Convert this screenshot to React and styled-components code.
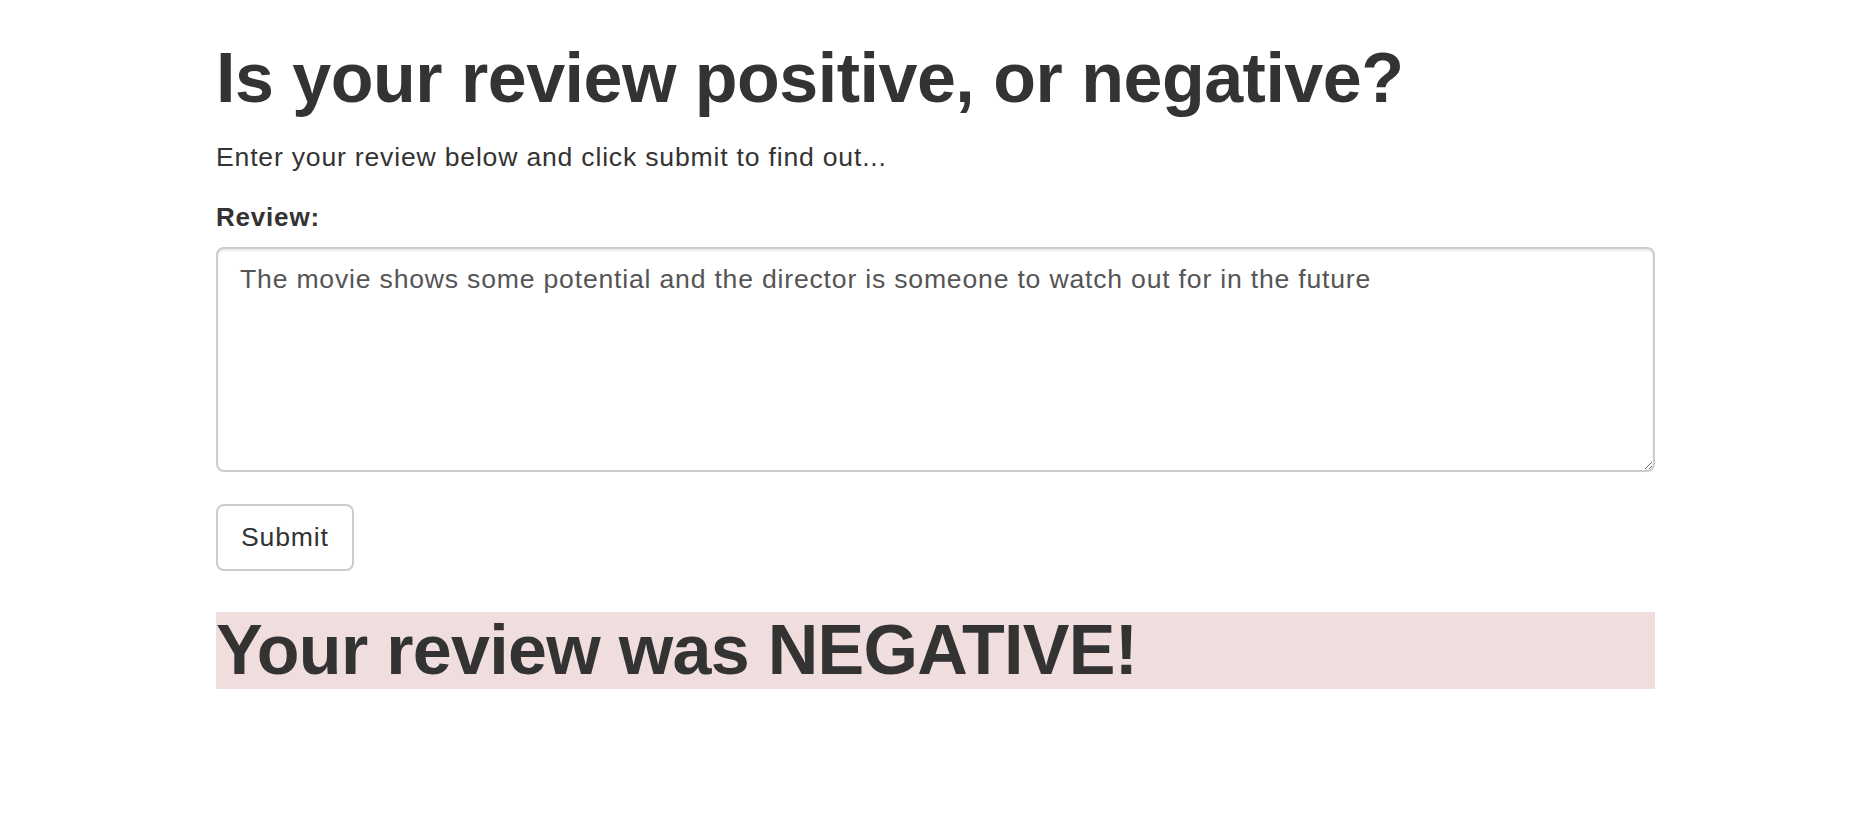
import React, { useState } from "react";
import styled, { createGlobalStyle } from "styled-components";

const GlobalStyle = createGlobalStyle`
  html, body {
    margin: 0;
    padding: 0;
    background: #ffffff;
  }
  body {
    font-family: "Liberation Sans", Arial, Helvetica, sans-serif;
    color: #333333;
  }
  * {
    box-sizing: border-box;
  }
`;

const Container = styled.div`
  width: 1439px;
  margin-left: 216px;
  padding-top: 40px;
  padding-bottom: 60px;
`;

const Title = styled.h1`
  margin: 0;
  font-size: 70px;
  line-height: 77px;
  font-weight: 700;
  letter-spacing: -0.5px;
`;

const Lead = styled.p`
  margin: 21px 0 0;
  font-size: 26.6px;
  line-height: 38px;
  letter-spacing: 0.8px;
`;

const Form = styled.form`
  margin-top: 22px;
  display: flex;
  flex-direction: column;
  align-items: flex-start;
`;

const FormGroup = styled.div`
  width: 100%;
  margin-bottom: 32px;
`;

const Label = styled.label`
  display: block;
  font-size: 26px;
  line-height: 38px;
  font-weight: 700;
  letter-spacing: 0.8px;
  margin-bottom: 11px;
`;

const TextArea = styled.textarea`
  display: block;
  width: 100%;
  height: 225px;
  padding: 11px 22px;
  font-family: inherit;
  font-size: 26.6px;
  line-height: 38px;
  letter-spacing: 0.8px;
  color: #555555;
  background: #ffffff;
  border: 2px solid #cccccc;
  border-radius: 8px;
  box-shadow: inset 0 2px 2px rgba(0, 0, 0, 0.075);
  outline: none;
`;

const Button = styled.button`
  height: 67px;
  padding: 0 23px;
  font-family: inherit;
  font-size: 26.6px;
  letter-spacing: 0.8px;
  color: #333333;
  background: #ffffff;
  border: 2px solid #cccccc;
  border-radius: 8px;
  cursor: pointer;
`;

const Result = styled.h1`
  margin: 41px 0 0;
  font-size: 70px;
  line-height: 77px;
  font-weight: 700;
  letter-spacing: -0.7px;
  background: ${(p) => (p.$negative ? "#f0dede" : "#dff0d8")};
`;

export default function App() {
  const [review, setReview] = useState(
    "The movie shows some potential and the director is someone to watch out for in the future"
  );

  return (
    <>
      <GlobalStyle />
      <Container>
        <Title>Is your review positive, or negative?</Title>
        <Lead>Enter your review below and click submit to find out...</Lead>
        <Form onSubmit={(e) => e.preventDefault()}>
          <FormGroup>
            <Label htmlFor="review">Review:</Label>
            <TextArea
              id="review"
              value={review}
              onChange={(e) => setReview(e.target.value)}
            />
          </FormGroup>
          <Button type="submit">Submit</Button>
        </Form>
        <Result $negative>Your review was NEGATIVE!</Result>
      </Container>
    </>
  );
}
